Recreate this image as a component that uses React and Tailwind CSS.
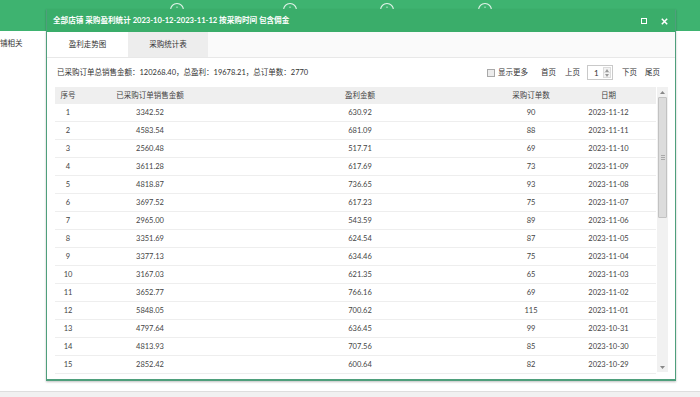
import React from "react";

const rows = [
  ["1", "3342.52", "630.92", "90", "2023-11-12"],
  ["2", "4583.54", "681.09", "88", "2023-11-11"],
  ["3", "2560.48", "517.71", "69", "2023-11-10"],
  ["4", "3611.28", "617.69", "73", "2023-11-09"],
  ["5", "4818.87", "736.65", "93", "2023-11-08"],
  ["6", "3697.52", "617.23", "75", "2023-11-07"],
  ["7", "2965.00", "543.59", "89", "2023-11-06"],
  ["8", "3351.69", "624.54", "87", "2023-11-05"],
  ["9", "3377.13", "634.46", "75", "2023-11-04"],
  ["10", "3167.03", "621.35", "65", "2023-11-03"],
  ["11", "3652.77", "766.16", "69", "2023-11-02"],
  ["12", "5848.05", "700.62", "115", "2023-11-01"],
  ["13", "4797.64", "636.45", "99", "2023-10-31"],
  ["14", "4813.93", "707.56", "85", "2023-10-30"],
  ["15", "2852.42", "600.64", "82", "2023-10-29"],
];

const cols = "grid grid-cols-[26px_138px_282px_60px_95px]";

function Arc({ className }) {
  return (
    <svg width="16" height="10" viewBox="0 0 16 10" className={className}>
      <path d="M1.5 10 A6.5 6.5 0 0 1 14.5 10" fill="none" stroke="rgba(255,255,255,0.85)" strokeWidth="1.2" />
      <path d="M8 6.5 L8 8" stroke="rgba(255,255,255,0.7)" strokeWidth="1" />
    </svg>
  );
}

export default function App() {
  return (
    <div
      className="relative w-[700px] h-[397px] overflow-hidden bg-white text-[#333] flex flex-col"
      style={{ fontFamily: 'Lato, "Noto Sans CJK SC", sans-serif' }}
    >
      {/* page top bar */}
      <div className="h-[31px] bg-[#3eb370] flex items-start pl-[169px]">
        <Arc />
        <Arc className="ml-[97px]" />
        <Arc className="ml-[81px]" />
        <Arc className="ml-[82px]" />
      </div>
      <div className="h-[26px] flex items-center text-[7.5px] pl-0">铺相关</div>
      <div className="flex-1" />
      <div className="h-[6px] bg-[#f1f1f1] border-t border-[#dedede]" />

      {/* modal */}
      <div className="absolute left-[46px] top-[9px] w-[630px] h-[372px] bg-white border-x border-t border-b-2 border-[#4f9f7c] border-t-[#3aad6a] flex flex-col shadow-[0_1px_2px_rgba(0,0,0,0.25)]">
        <div className="h-[22px] bg-[#3aad6a] flex items-center pl-[6px] pr-[7px] text-white">
          <span className="text-[7.6px] font-bold">
            全部店铺 采购盈利统计 2023-10-12-2023-11-12 按采购时间 包含佣金
          </span>
          <div className="ml-auto flex items-center">
            <div className="w-[6px] h-[6px] border-[1.5px] border-white" />
            <svg width="7" height="7" viewBox="0 0 7 7" className="ml-[14px]">
              <path d="M0.8 0.8 L6.2 6.2 M6.2 0.8 L0.8 6.2" stroke="white" strokeWidth="1.5" />
            </svg>
          </div>
        </div>

        <div className="h-[26px] bg-[#fafafa] border-b border-[#e8e8e8] flex text-[7.5px]">
          <div className="w-[81px] flex items-center justify-center bg-white">盈利走势图</div>
          <div className="w-[80px] flex items-center justify-center bg-[#ededed]">采购统计表</div>
        </div>

        <div className="h-[29px] flex items-center pl-[10px] pr-[15px] text-[7.5px]">
          <span>已采购订单总销售金额：120268.40，总盈利：19678.21，总订单数：2770</span>
          <div className="ml-auto flex items-center">
            <div className="w-[8px] h-[8px] border border-[#a9a9a9] bg-[#ececec]" />
            <span className="ml-[3px]">显示更多</span>
            <span className="ml-[13px]">首页</span>
            <span className="ml-[9px]">上页</span>
            <div className="ml-[7px] w-[26px] h-[15px] border border-[#c9c9c9] bg-white flex items-center">
              <span className="ml-[6px] text-[8px]">1</span>
              <div className="ml-auto mr-[1px] w-[8px] h-[11px] flex flex-col border border-[#dcdcdc] bg-[#f3f3f3]">
                <div className="flex-1 flex items-center justify-center border-b border-[#dcdcdc]">
                  <svg width="4" height="3" viewBox="0 0 4 3"><path d="M0 3 L2 0 L4 3Z" fill="#999" /></svg>
                </div>
                <div className="flex-1 flex items-center justify-center">
                  <svg width="4" height="3" viewBox="0 0 4 3"><path d="M0 0 L2 3 L4 0Z" fill="#999" /></svg>
                </div>
              </div>
            </div>
            <span className="ml-[9px]">下页</span>
            <span className="ml-[8px]">尾页</span>
          </div>
        </div>

        <div className="flex pl-[8px] text-[7.5px]">
          <div className="w-[601px]">
            <div className={`${cols} h-[17px] items-center bg-[#efefef] text-[#444]`}>
              <div className="text-center">序号</div>
              <div className="text-center">已采购订单销售金额</div>
              <div className="text-center">盈利金额</div>
              <div className="text-center">采购订单数</div>
              <div className="text-center">日期</div>
            </div>
            {rows.map((r) => (
              <div key={r[0]} className={`${cols} h-[18px] items-center border-b border-[#eeeeee] text-[#444]`}>
                {r.map((c, i) => (
                  <div key={i} className="text-center">{c}</div>
                ))}
              </div>
            ))}
          </div>
          {/* scrollbar */}
          <div className="ml-[1px] w-[11px] h-[285px] bg-[#f1f1f1] flex flex-col">
            <div className="h-[10px] flex items-center justify-center">
              <svg width="5" height="3" viewBox="0 0 5 3"><path d="M0 3 L2.5 0 L5 3Z" fill="#888" /></svg>
            </div>
            <div className="mx-[1px] h-[121px] bg-[#dcdcdc] border border-[#c2c2c2] rounded-[1px] flex flex-col items-center justify-center gap-[1px]">
              <div className="w-[4px] h-px bg-[#a9a9a9]" />
              <div className="w-[4px] h-px bg-[#a9a9a9]" />
              <div className="w-[4px] h-px bg-[#a9a9a9]" />
            </div>
            <div className="flex-1" />
            <div className="h-[10px] flex items-center justify-center">
              <svg width="5" height="3" viewBox="0 0 5 3"><path d="M0 0 L2.5 3 L5 0Z" fill="#888" /></svg>
            </div>
          </div>
        </div>
      </div>
    </div>
  );
}
